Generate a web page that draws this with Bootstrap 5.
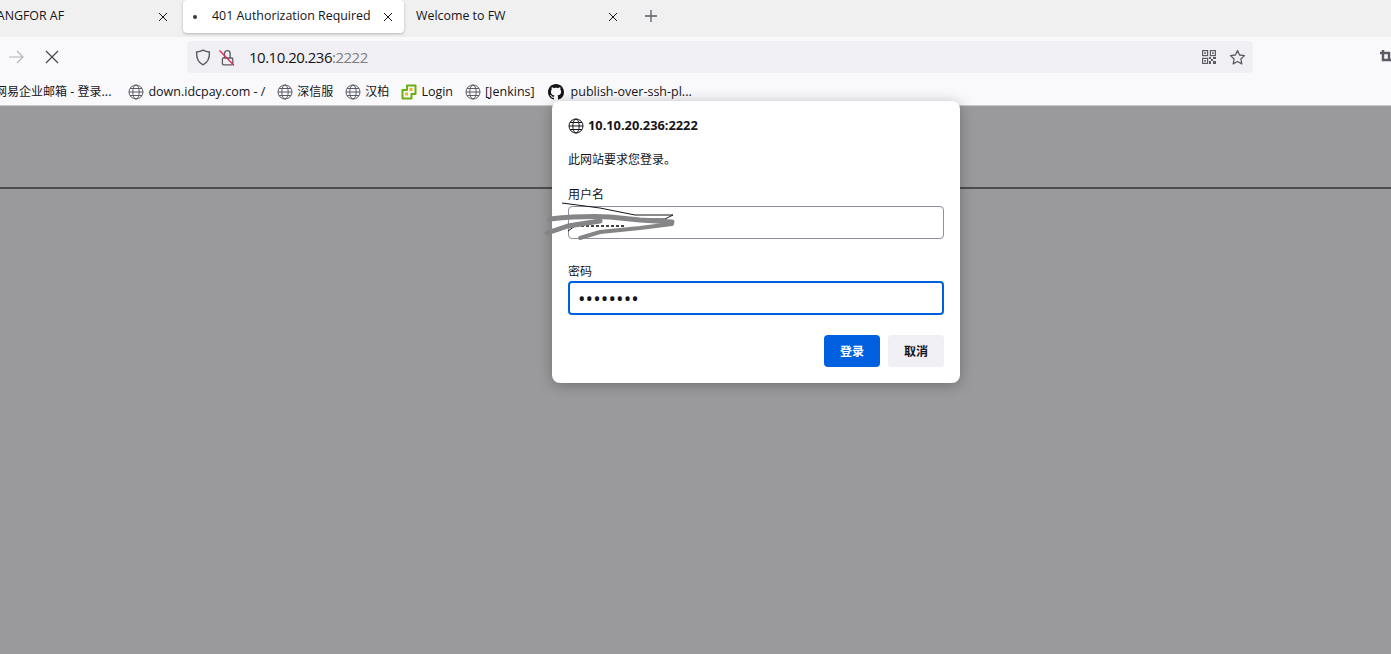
<!DOCTYPE html>
<html lang="zh">
<head>
<meta charset="utf-8">
<title>401 Authorization Required</title>
<link href="https://cdn.jsdelivr.net/npm/bootstrap@5.3.0/dist/css/bootstrap.min.css" rel="stylesheet">
<style>
html,body{height:100%;margin:0;overflow:hidden}
body{font-family:"Open Sans","Noto Sans CJK SC",sans-serif;font-size:13px;color:#15141a;background:#9a9a9c;position:relative}
svg{display:block;flex:none}
.ff-tabs{height:37px;background:#f0f0f0}
.ff-tab{height:33px;width:221px;padding:0 11px 0 8px;flex:none;white-space:nowrap;overflow:hidden}
.ff-tab-first{width:180px;margin-right:3px;padding-right:12px}
.ff-tab-first .ff-tt{margin-left:-18px}
.ff-tab-on{background:#fff;border-radius:4px;box-shadow:0 1px 3px rgba(0,0,0,.25)}
.ff-tab-last{width:224px;padding-left:12px;padding-right:10px}
.ff-tt{flex:1 1 auto;font-size:12.4px;overflow:hidden}
.ff-dot{width:4px;height:4px;border-radius:50%;background:#3a3a3d;margin:0 15px 0 2px;flex:none}
.ff-plus{height:31px;margin-left:16px}
.ff-bar{height:37px;background:#f9f9fb;padding-top:3px}
.ff-back{margin-left:8px}
.ff-stop{margin-left:21px}
.ff-url{width:1066px;height:32px;background:#f0f0f4;border-radius:4px;margin-left:128px;padding:0 7px 0 8px;font-size:15px}
.ff-host{letter-spacing:-.5px;margin-left:14px}
.ff-port{color:#7d7d82;letter-spacing:-.5px}
.ff-star{margin-left:13px}
.ff-marks{height:32px;background:#f9f9fb;font-size:12.5px;white-space:nowrap;overflow:hidden;border-bottom:1px solid #c9c9cb;padding-top:5px}
.ff-cjk{font-size:12px}
.ff-mark{gap:4px}
.ff-first-mark{margin-left:-5px}
.ff-m1{margin-left:17px}
.ff-m2{margin-left:12px}
.ff-m3{margin-left:12px}
.ff-m4{margin-left:12px}
.ff-m5{margin-left:12px}
.ff-m6{margin-left:13px;gap:7px}
.ff-page{flex:1 1 auto;background:#9a9a9c}
.ff-rule{height:83px;border-bottom:2px solid #4c4c4e}
.ff-dialog{position:absolute;left:552px;top:101px;width:408px;height:282px;background:#fff;border-radius:8px;box-shadow:0 2px 14px rgba(0,0,0,.28);padding:16px;font-size:12px}
.ff-origin{font-weight:700;font-size:12.8px;gap:4px;height:18px}
.ff-msg{margin-top:16px;height:18px;line-height:18px}
.ff-lab{display:block;line-height:18px;height:18px;margin:0}
.ff-first{margin-top:17px}
.ff-second{margin-top:24px}
.ff-input.form-control{height:33px;border:1px solid #8f8f9d;border-radius:4px;padding:0 8px;font-size:12px;box-shadow:none;background:#fff;margin-top:2px}
.ff-input-on.form-control{height:34px;border:2px solid #0061e0;margin-top:0;font-size:20px;padding:0 8px;color:#15141a;letter-spacing:.1px}
.ff-actions{margin-top:20px;gap:8px}
.ff-btn.btn{width:56px;height:32px;padding:2px 0 0;border:0;border-radius:4px;font-size:12px;font-weight:700;line-height:30px}
.ff-ok.btn{background:#0061e0;color:#fff}
.ff-no.btn{background:#f0f0f4;color:#15141a}
.ff-scrib{position:absolute;left:540px;top:195px;width:150px;height:50px}
</style>
</head>
<body class="d-flex flex-column">

<div class="ff-tabs d-flex align-items-start">
  <div class="ff-tab ff-tab-first d-flex align-items-center">
    <span class="ff-tt">SANGFOR AF</span>
    <svg width="10" height="10" viewBox="0 0 10 10" stroke="#15141a" fill="none"><path d="M1 1l8 8M9 1l-8 8"/></svg>
  </div>
  <div class="ff-tab ff-tab-on d-flex align-items-center">
    <span class="ff-dot"></span>
    <span class="ff-tt">401 Authorization Required</span>
    <svg width="10" height="10" viewBox="0 0 10 10" stroke="#15141a" fill="none"><path d="M1 1l8 8M9 1l-8 8"/></svg>
  </div>
  <div class="ff-tab ff-tab-last d-flex align-items-center">
    <span class="ff-tt">Welcome to FW</span>
    <svg width="10" height="10" viewBox="0 0 10 10" stroke="#15141a" fill="none"><path d="M1 1l8 8M9 1l-8 8"/></svg>
  </div>
  <div class="ff-plus d-flex align-items-center">
    <svg width="14" height="14" viewBox="0 0 14 14" stroke="#5b5b66" stroke-width="1.3" fill="none"><path d="M7 1v12M1 7h12"/></svg>
  </div>
</div>

<div class="ff-bar d-flex align-items-center">
  <svg class="ff-back" width="16" height="14" viewBox="0 0 16 14" stroke="#b4b4b8" stroke-width="1.2" fill="none"><path d="M1 7h14M9 1l6 6-6 6"/></svg>
  <svg class="ff-stop" width="14" height="14" viewBox="0 0 14 14" stroke="#4a4a52" stroke-width="1.3" fill="none"><path d="M1 1l12 12M13 1L1 13"/></svg>
  <div class="ff-url d-flex align-items-center">
    <svg width="16" height="17" viewBox="0 0 16 17" stroke="#5b5b66" stroke-width="1.4" fill="none"><path d="M8 1.200c2 1.200 4.200 1.700 6.400 1.800.3 6-1.800 10.700-6.400 12.800C3.400 13.700 1.300 9 1.600 3 3.800 2.900 6 2.400 8 1.200z"/></svg>
    <svg class="ms-2" width="16" height="17" viewBox="0 0 16 17" fill="none"><path d="M5.500 9V4.500a2.800 2.800 0 0 1 5.600 0V9" stroke="#5b5b66" stroke-width="1.300"/><rect x="3.400" y="9" width="10.400" height="6.800" rx="1" stroke="#5b5b66" stroke-width="1.300"/><path d="M.5 1.500L15 16.500" stroke="#e22850" stroke-width="1.300"/></svg>
    <span class="ff-host">10.10.20.236<span class="ff-port">:2222</span></span>
    <span class="flex-grow-1"></span>
    <svg width="14" height="14" viewBox="0 0 14 14"><g fill="none" stroke="#5b5b66" stroke-width="1.200"><rect x=".6" y=".6" width="5" height="5"/><rect x="8.400" y=".6" width="5" height="5"/><rect x=".6" y="8.400" width="5" height="5"/></g><path fill="#5b5b66" d="M2.300 2.300h1.600v1.600H2.300zM10.100 2.300h1.600v1.600h-1.600zM2.300 10.100h1.600v1.600H2.300zM7 7h2v2H7zM9 9h2v2H9zM11 7h3v2h-3zM7 11h2v3H7zM11 11h3v3h-3z"/></svg>
    <svg class="ff-star" width="17" height="17" viewBox="0 0 17 17" fill="none" stroke="#5b5b66" stroke-width="1.300"><path d="M8.500 1.500l2.100 4.500 4.900.6-3.600 3.400.9 4.900-4.300-2.400-4.300 2.400.9-4.900L1.500 6.600l4.900-.6z" stroke-linejoin="round"/></svg>
  </div>
  <span class="flex-grow-1"></span>
  <svg width="11" height="16" viewBox="0 0 11 16" fill="none" stroke="#5b5b66" stroke-width="2.500"><path d="M3 1v10h9M0 4h9v8"/></svg>
</div>

<div class="ff-marks d-flex align-items-center">
  <span class="ff-first-mark"><span class="ff-cjk">网易企业邮箱</span> - <span class="ff-cjk">登录</span>...</span>
  <span class="ff-mark ff-m1 d-flex align-items-center">
    <svg width="16" height="16" viewBox="0 0 16 16" fill="none" stroke="#5b5b66" stroke-width="1"><circle cx="8" cy="8" r="7"/><ellipse cx="8" cy="8" rx="3.200" ry="7"/><path d="M1 8h14M2 4.500h12M2 11.500h12"/></svg>down.idcpay.com - /</span>
  <span class="ff-mark ff-m2 d-flex align-items-center">
    <svg width="16" height="16" viewBox="0 0 16 16" fill="none" stroke="#5b5b66" stroke-width="1"><circle cx="8" cy="8" r="7"/><ellipse cx="8" cy="8" rx="3.200" ry="7"/><path d="M1 8h14M2 4.500h12M2 11.500h12"/></svg><span class="ff-cjk">深信服</span></span>
  <span class="ff-mark ff-m3 d-flex align-items-center">
    <svg width="16" height="16" viewBox="0 0 16 16" fill="none" stroke="#5b5b66" stroke-width="1"><circle cx="8" cy="8" r="7"/><ellipse cx="8" cy="8" rx="3.200" ry="7"/><path d="M1 8h14M2 4.500h12M2 11.500h12"/></svg><span class="ff-cjk">汉柏</span></span>
  <span class="ff-mark ff-m4 d-flex align-items-center">
    <svg width="16" height="16" viewBox="0 0 16 16" fill="none"><path d="M6 1.500h8.500v8.500h-4v4.500h-9V6H6z" stroke="#6aaf0e" stroke-width="2" stroke-linejoin="round"/><path fill="#f2b51a" d="M4 8.500h3v3H4zM8.500 4h3v3h-3z"/></svg>Login</span>
  <span class="ff-mark ff-m5 d-flex align-items-center">
    <svg width="16" height="16" viewBox="0 0 16 16" fill="none" stroke="#5b5b66" stroke-width="1"><circle cx="8" cy="8" r="7"/><ellipse cx="8" cy="8" rx="3.200" ry="7"/><path d="M1 8h14M2 4.500h12M2 11.500h12"/></svg>[Jenkins]</span>
  <span class="ff-mark ff-m6 d-flex align-items-center">
    <svg width="16" height="16" viewBox="0 0 16 16" fill="#15141a"><path d="M8 0C3.580 0 0 3.580 0 8c0 3.540 2.290 6.530 5.470 7.590.4.070.55-.17.55-.38 0-.19-.01-.82-.01-1.490-2.010.37-2.530-.49-2.690-.94-.09-.23-.48-.94-.82-1.130-.28-.15-.68-.52-.01-.53.63-.01 1.080.58 1.230.82.720 1.210 1.870.87 2.330.66.070-.52.280-.87.510-1.070-1.780-.2-3.640-.89-3.640-3.950 0-.87.310-1.590.820-2.150-.08-.2-.36-1.020.08-2.120 0 0 .67-.21 2.200.82.640-.18 1.320-.27 2-.27s1.360.09 2 .27c1.530-1.040 2.200-.82 2.200-.82.440 1.100.16 1.920.08 2.120.51.560.82 1.270.82 2.150 0 3.070-1.870 3.750-3.650 3.950.29.250.54.730.54 1.480 0 1.070-.01 1.930-.01 2.200 0 .21.150.46.550.38A8.010 8.010 0 0 0 16 8c0-4.420-3.580-8-8-8z"/></svg>publish-over-ssh-pl...</span>
</div>

<div class="ff-page">
  <div class="ff-rule"></div>
</div>

<div class="ff-dialog" role="dialog">
  <div class="ff-origin d-flex align-items-center">
    <svg width="16" height="16" viewBox="0 0 16 16" fill="none" stroke="#15141a" stroke-width="1"><circle cx="8" cy="8" r="7"/><ellipse cx="8" cy="8" rx="3.200" ry="7"/><path d="M1 8h14M2 4.500h12M2 11.500h12"/></svg>
    <span>10.10.20.236:2222</span>
  </div>
  <div class="ff-msg">此网站要求您登录。</div>
  <label class="ff-lab ff-first" for="ff-u">用户名</label>
  <input id="ff-u" class="form-control ff-input" type="text">
  <label class="ff-lab ff-second" for="ff-p">密码</label>
  <input id="ff-p" class="form-control ff-input ff-input-on" type="text" value="••••••••">
  <div class="ff-actions d-flex justify-content-end">
    <button class="btn ff-btn ff-ok" type="button">登录</button>
    <button class="btn ff-btn ff-no" type="button">取消</button>
  </div>
</div>

<svg class="ff-scrib" viewBox="0 0 150 50" fill="none">
  <path d="M22 8L60 13l35 7 38 0-8 4-25 0" stroke="#15141a" stroke-width="1"/>
  <path d="M28 36l7-5" stroke="#15141a" stroke-width="1"/>
  <path d="M36 31h48" stroke="#444" stroke-width="2" stroke-dasharray="3 2"/>
  <path d="M10 24c20-2 40-3 60-2l30 3 32 2" stroke="#858587" stroke-width="5" stroke-linecap="round" stroke-linejoin="round"/>
  <path d="M7 38l21-7 32-5" stroke="#858587" stroke-width="5" stroke-linecap="round" stroke-linejoin="round"/>
  <path d="M40 43l20-6 40-4 32-4" stroke="#858587" stroke-width="4" stroke-linecap="round" stroke-linejoin="round"/>
</svg>

</body>
</html>
